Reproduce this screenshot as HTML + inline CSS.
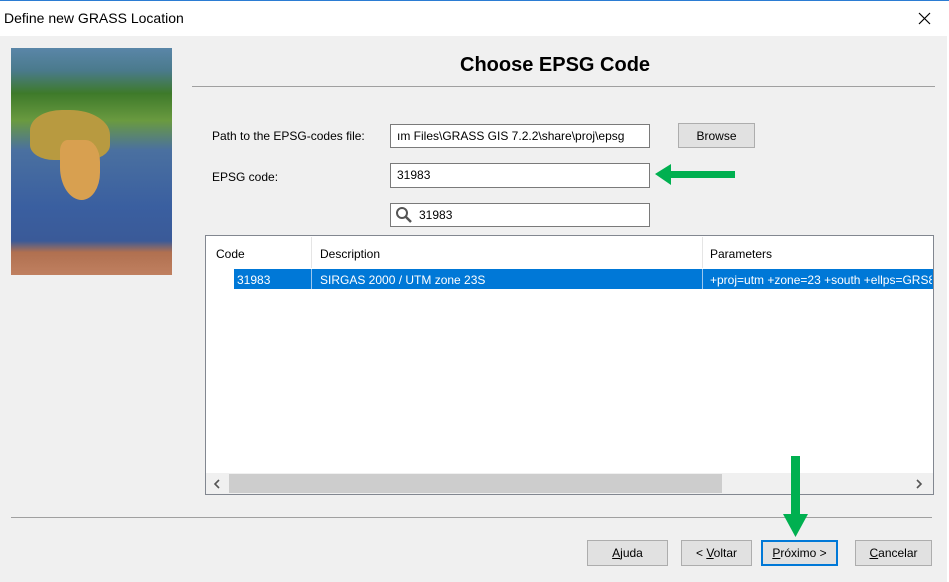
<!DOCTYPE html>
<html><head><style>
body{margin:0;width:949px;height:582px;background:#f0f0f0;font-family:"Liberation Sans",sans-serif;font-size:12px;color:#000;position:relative;overflow:hidden}
.a{position:absolute}
.inp{position:absolute;background:#fff;border:1px solid #7a7a7a;box-sizing:border-box;padding-left:6px;line-height:22px;font-size:12px;white-space:nowrap;overflow:hidden}
.btn{position:absolute;background:#e1e1e1;border:1px solid #adadad;box-sizing:border-box;text-align:center;line-height:24px;font-size:12px}
</style></head><body>
<div class="a" style="left:0;top:0;width:949px;height:36px;background:#fff;border-top:1px solid #2b7cd3;box-sizing:border-box"></div>
<div class="a" style="left:4px;top:10px;font-size:14px">Define new GRASS Location</div>
<svg class="a" style="left:918px;top:12px" width="13" height="13"><path d="M1 1L12 12M12 1L1 12" stroke="#000" stroke-width="1.2"/></svg>
<div class="a" style="right:0;top:36px;width:2px;height:546px;background:#fff"></div>
<div class="a" style="left:11px;top:48px;width:161px;height:227px;background:linear-gradient(180deg,#5a86a8 0%,#4a7a8c 10%,#3e7a2a 20%,#6a9a40 32%,#4a70a0 45%,#3a5fa0 70%,#3a5a98 85%,#b07050 90%,#c08060 100%)"></div>
<div class="a" style="left:30px;top:110px;width:80px;height:50px;background:#b89a40;border-radius:40% 50% 30% 30%"></div>
<div class="a" style="left:60px;top:140px;width:40px;height:60px;background:#d8a050;border-radius:20% 40% 50% 60%"></div>
<div class="a" style="left:460px;top:54px;font-size:20px;font-weight:bold">Choose EPSG Code</div>
<div class="a" style="left:192px;top:86px;width:743px;height:1px;background:#a0a0a0"></div>
<div class="a" style="left:212px;top:129px">Path to the EPSG-codes file:</div>
<div class="inp" style="left:390px;top:124px;width:260px;height:24px">ım Files\GRASS GIS 7.2.2\share\proj\epsg</div>
<div class="btn" style="left:678px;top:123px;width:77px;height:25px">Browse</div>
<div class="a" style="left:212px;top:170px">EPSG code:</div>
<div class="inp" style="left:390px;top:163px;width:260px;height:25px">31983</div>
<svg class="a" style="left:654px;top:163px" width="82" height="24"><path d="M1 11L17 1V8H81V15H17V22Z" fill="#00b050"/></svg>
<div class="inp" style="left:390px;top:203px;width:260px;height:24px;padding-left:28px">31983</div>
<svg class="a" style="left:395px;top:206px" width="18" height="18"><circle cx="7" cy="7" r="5" fill="none" stroke="#555" stroke-width="2"/><path d="M11 11L16 16" stroke="#555" stroke-width="2.5"/></svg>
<div class="a" style="left:205px;top:235px;width:729px;height:260px;background:#fff;border:1px solid #828790;box-sizing:border-box"></div>
<div class="a" style="left:311px;top:237px;width:1px;height:31px;background:#e5e5e5"></div>
<div class="a" style="left:702px;top:237px;width:1px;height:31px;background:#e5e5e5"></div>
<div class="a" style="left:216px;top:247px">Code</div>
<div class="a" style="left:320px;top:247px">Description</div>
<div class="a" style="left:710px;top:247px">Parameters</div>
<div class="a" style="left:234px;top:269px;width:699px;height:20px;background:#0078d7"></div>
<div class="a" style="left:311px;top:269px;width:1px;height:20px;background:#9cc7ee"></div>
<div class="a" style="left:702px;top:269px;width:1px;height:20px;background:#9cc7ee"></div>
<div class="a" style="left:237px;top:273px;color:#fff">31983</div>
<div class="a" style="left:320px;top:273px;color:#fff">SIRGAS 2000 / UTM zone 23S</div>
<div class="a" style="left:710px;top:273px;color:#fff;white-space:nowrap;width:222px;overflow:hidden">+proj=utm +zone=23 +south +ellps=GRS80</div>
<div class="a" style="left:206px;top:473px;width:727px;height:21px;background:#f0f0f0"></div>
<div class="a" style="left:229px;top:474px;width:493px;height:19px;background:#cdcdcd"></div>
<svg class="a" style="left:213px;top:479px" width="8" height="10"><path d="M6 1L2 5L6 9" fill="none" stroke="#555" stroke-width="1.6"/></svg>
<svg class="a" style="left:915px;top:479px" width="8" height="10"><path d="M2 1L6 5L2 9" fill="none" stroke="#555" stroke-width="1.6"/></svg>
<div class="a" style="left:11px;top:517px;width:921px;height:1px;background:#a0a0a0"></div>
<div class="btn" style="left:587px;top:540px;width:81px;height:26px"><u>A</u>juda</div>
<div class="btn" style="left:681px;top:540px;width:71px;height:26px">&lt; <u>V</u>oltar</div>
<div class="btn" style="left:761px;top:540px;width:77px;height:26px;border:2px solid #0078d7;line-height:22px"><u>P</u>róximo &gt;</div>
<div class="btn" style="left:855px;top:540px;width:77px;height:26px"><u>C</u>ancelar</div>
<svg class="a" style="left:782px;top:456px" width="28" height="82"><path d="M9 0H18V58H26L13.5 81L1 58H9Z" fill="#00b050"/></svg>
</body></html>
